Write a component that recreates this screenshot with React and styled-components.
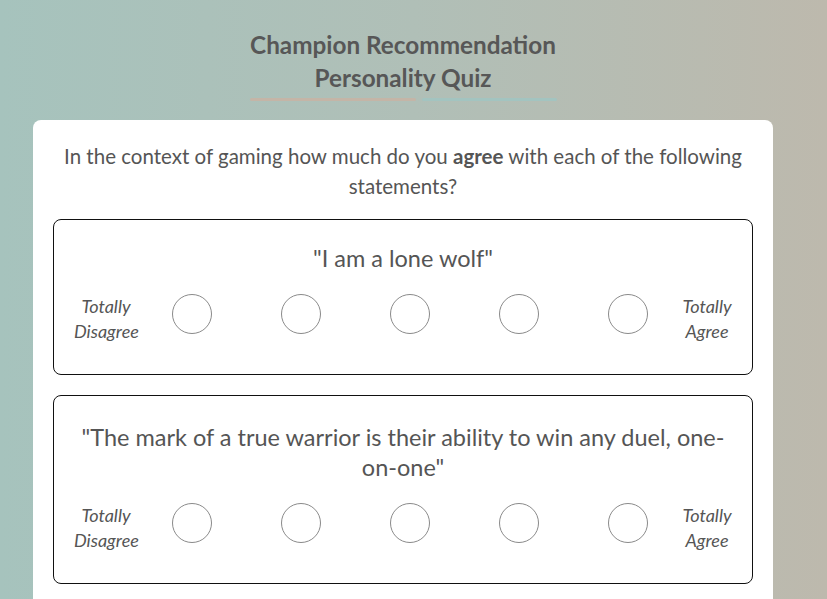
import React from "react";
import styled, { createGlobalStyle } from "styled-components";

const Global = createGlobalStyle`
  html, body { margin: 0; padding: 0; }
  body {
    font-family: Lato, "Open Sans", sans-serif;
    color: #555;
    background: linear-gradient(90deg, #a6c3bd 0%, #b0bfb7 50%, #bdb9ad 100%);
    min-height: 599px;
    overflow: hidden;
  }
`;

const Page = styled.div`
  width: 806px;
  display: flex;
  flex-direction: column;
  align-items: center;
  padding-top: 28px;
`;

const Header = styled.header`
  display: flex;
  flex-direction: column;
  align-items: center;
`;

const Title = styled.h1`
  margin: 0;
  font-size: 24.3px;
  font-weight: 700;
  line-height: 33px;
  text-align: center;
  color: #575757;
`;

const Underline = styled.div`
  display: flex;
  gap: 6px;
  margin-top: 4px;
  width: 307px;
  height: 3px;
`;

const Bar = styled.span`
  display: block;
  height: 3px;
  border-radius: 2px;
  flex: ${(p) => p.$grow};
  background: ${(p) => p.$color};
`;

const Card = styled.main`
  margin-top: 19px;
  width: 740px;
  box-sizing: border-box;
  background: #fff;
  border-radius: 8px 8px 0 0;
  padding: 21px 20px 40px;
  display: flex;
  flex-direction: column;
  gap: 20px;
`;

const Intro = styled.p`
  margin: 0 0 -2px;
  font-size: 20.5px;
  line-height: 30px;
  text-align: center;
  color: #555;
  b { font-weight: 700; }
`;

const Box = styled.section`
  border: 1px solid #111;
  border-radius: 8px;
  padding: ${(p) => (p.$multi ? "26px" : "23px")} 20px 30px;
  display: flex;
  flex-direction: column;
  gap: 21px;
`;

const Statement = styled.h2`
  margin: 0;
  font-size: 23.5px;
  font-weight: 400;
  line-height: 30px;
  text-align: center;
  color: #555;
  padding: 0 4px;
`;

const Scale = styled.div`
  display: flex;
  align-items: flex-start;
  justify-content: space-between;
`;

const Label = styled.span`
  font-size: 18px;
  font-style: italic;
  line-height: 25px;
  text-align: center;
  color: #555;
  width: ${(p) => p.$w}px;
`;

const Options = styled.div`
  display: flex;
  gap: 69px;
`;

const Radio = styled.button`
  width: 40px;
  height: 40px;
  box-sizing: border-box;
  border-radius: 50%;
  border: 1px solid #8a8a8a;
  background: #fff;
  padding: 0;
  cursor: pointer;
`;

const questions = [
  { text: '"I am a lone wolf"', multi: false },
  {
    text: '"The mark of a true warrior is their ability to win any duel, one-on-one"',
    multi: true,
  },
];

export default function App() {
  return (
    <>
      <Global />
      <Page>
        <Header>
          <Title>
            Champion Recommendation
            <br />
            Personality Quiz
          </Title>
          <Underline>
            <Bar $grow="166" $color="#c4b5a7" />
            <Bar $grow="135" $color="#a3c4c0" />
          </Underline>
        </Header>
        <Card>
          <Intro>
            In the context of gaming how much do you <b>agree</b> with each of the following
            statements?
          </Intro>
          {questions.map((q, i) => (
            <Box key={i} $multi={q.multi}>
              <Statement>{q.text}</Statement>
              <Scale>
                <Label $w={64}>
                  Totally
                  <br />
                  Disagree
                </Label>
                <Options>
                  {[1, 2, 3, 4, 5].map((n) => (
                    <Radio key={n} aria-label={`Option ${n}`} />
                  ))}
                </Options>
                <Label $w={50}>
                  Totally
                  <br />
                  Agree
                </Label>
              </Scale>
            </Box>
          ))}
        </Card>
      </Page>
    </>
  );
}
